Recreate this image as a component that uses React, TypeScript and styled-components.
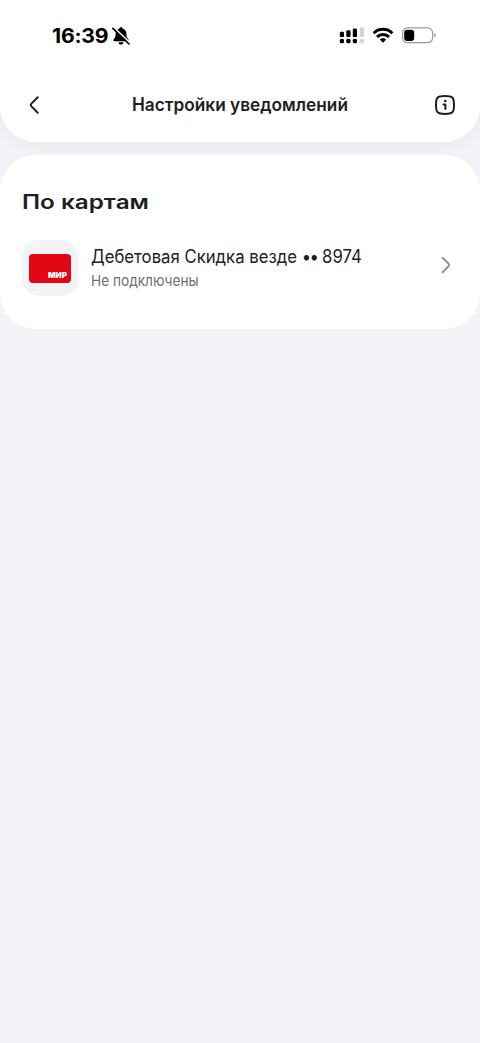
import React from "react";
import styled, { createGlobalStyle } from "styled-components";

const GlobalStyle = createGlobalStyle`
  *, *::before, *::after { box-sizing: border-box; }
  body {
    margin: 0;
    background: #f1f3f7;
    color: #1d2023;
    font-family: Inter, "Liberation Sans", sans-serif;
  }
`;

const Screen = styled.div`
  width: 100%;
  min-height: 1043px;
  display: flex;
  flex-direction: column;
  gap: 13px;
  background: #f1f3f7;
`;

const Header = styled.header`
  height: 142px;
  background: #fff;
  border-radius: 0 0 36px 36px;
  box-shadow: 0 4px 20px rgba(20, 25, 40, 0.04);
`;

const StatusBar = styled.div`
  display: flex;
  align-items: center;
  height: 71px;
  padding: 0 43px 0 52px;
`;

const Time = styled.span`
  width: 59px;
  font-size: 20px;
  font-weight: 700;
  line-height: 24px;
  letter-spacing: -0.2px;
  color: #000;
`;

const StatusIcons = styled.div`
  display: flex;
  align-items: center;
  gap: 8px;
  margin-left: auto;
`;

const Icon = styled.svg`
  display: block;
  flex: none;
`;

const NavBar = styled.div`
  display: flex;
  align-items: center;
  height: 67px;
  padding: 0 22px;
`;

const IconButton = styled.button`
  display: flex;
  padding: 0;
  border: 0;
  background: none;
  color: #1d2023;
`;

const FitText = styled.span<{ $scale: number }>`
  display: block;
  width: max-content;
  white-space: nowrap;
  transform: scaleX(${(p) => p.$scale});
  transform-origin: 0 50%;
`;

const Title = styled.h1`
  width: 216px;
  margin: 0 85px 0 86px;
  font-size: 18px;
  font-weight: 600;
  line-height: 24px;
`;

const Card = styled.section`
  display: flex;
  flex-direction: column;
  gap: 24px;
  height: 174px;
  padding: 33px 22px 0;
  background: #fff;
  border-radius: 36px;
  position: relative;
`;

const SectionTitle = styled.h2`
  margin: 0;
  font-size: 20px;
  font-weight: 600;
  line-height: 28px;
`;

const Row = styled.div`
  display: flex;
  align-items: center;
  height: 56px;
`;

const CardTile = styled.div`
  display: flex;
  align-items: center;
  justify-content: center;
  width: 56px;
  height: 56px;
  border-radius: 17px;
  background: #f2f3f7;
`;

const BankCard = styled.div`
  display: flex;
  align-items: flex-end;
  justify-content: flex-end;
  width: 42px;
  height: 29px;
  padding: 0 4px 4px 0;
  border-radius: 4px;
  background: #e30613;
  color: #fff;
`;

const Brand = styled.span`
  font-size: 8px;
  font-weight: 900;
  line-height: 8px;
`;

const RowText = styled.div`
  flex: 1;
  margin-left: 13px;
  padding-top: 2px;
`;

const RowTitle = styled.div`
  font-size: 18px;
  line-height: 24px;
`;

const Dots = styled.span`
  letter-spacing: -1.7px;
`;

const RowStatus = styled.div`
  font-size: 15px;
  line-height: 24px;
  color: #6b7073;
`;

const RowChevron = styled(Icon)`
  margin-bottom: 6px;
`;

const BellOff = () => (
  <Icon width="20" height="20" viewBox="0 0 20 20">
    <path d="M10 1.200c-1 0-1.700.6-1.900 1.500C5.700 3.500 4.600 5.400 4.600 8c0 3-.7 4-1.900 5.300-.8.9-.4 2 .8 2h13c1.200 0 1.600-1.100.8-2C16.100 12 15.400 11 15.400 8c0-2.600-1.100-4.500-3.500-5.300-.2-.9-.9-1.500-1.900-1.500zM7.500 16.200c.2 1.400 1.200 2.300 2.500 2.300s2.300-.9 2.500-2.300z" fill="#000" />
    <path d="M3 1.700 19.200 17" stroke="#fff" strokeWidth="1.700" />
    <path d="M1.800 2.300 18 18" stroke="#000" strokeWidth="1.700" strokeLinecap="round" />
  </Icon>
);

const signal = [
  { x: 0, top: 4.5 },
  { x: 6.5, top: 3 },
  { x: 13, top: 1.2 },
  { x: 20, top: 0 },
];

const Signal = () => (
  <Icon width="25" height="17" viewBox="0 0 25 17">
    {signal.map((bar, i) => (
      <g key={bar.x} fill={i === 3 ? "#d4d4d6" : "#000"}>
        <rect x={bar.x + 0.8} y={bar.top + 0.3} width="4.200" height={9.8 - bar.top} rx="1.200" />
        <rect x={bar.x + 0.8} y="11.800" width="4.200" height="4.500" rx="1.500" />
      </g>
    ))}
  </Icon>
);

const Wifi = () => (
  <Icon width="22" height="17" viewBox="0 0 22 17">
    <g fill="none" stroke="#000" strokeWidth="2.900">
      <path d="M1.600 6.200a13.300 13.300 0 0 1 18.800 0" />
      <path d="M5 9.900a8.600 8.600 0 0 1 12 0" />
    </g>
    <path d="m11 15.800-3.200-3.200a4.600 4.600 0 0 1 6.400 0z" fill="#000" />
  </Icon>
);

const Battery = () => (
  <Icon width="35" height="17" viewBox="0 0 35 17">
    <rect x="0.600" y="0.900" width="30" height="14.800" rx="4.800" fill="none" stroke="#9b9b9d" strokeWidth="1.200" />
    <rect x="2.200" y="2.700" width="10" height="11.200" rx="3" fill="#000" />
    <path d="M32.200 5.800c1.900.8 1.900 4.200 0 5z" fill="#9b9b9d" />
  </Icon>
);

export default function App() {
  return (
    <>
      <GlobalStyle />
      <Screen>
        <Header>
          <StatusBar>
            <Time><FitText $scale={1.06}>16:39</FitText></Time>
            <BellOff />
            <StatusIcons>
              <Signal />
              <Wifi />
              <Battery />
            </StatusIcons>
          </StatusBar>
          <NavBar>
            <IconButton aria-label="Назад">
              <Icon width="24" height="24" viewBox="0 0 24 24">
                <path d="m15.700 4.300-6.500 6.600a1.600 1.600 0 0 0 0 2.200l6.500 6.600" fill="none" stroke="currentColor" strokeWidth="2" strokeLinecap="round" />
              </Icon>
            </IconButton>
            <Title><FitText $scale={0.958}>Настройки уведомлений</FitText></Title>
            <IconButton aria-label="Информация">
              <Icon width="24" height="24" viewBox="0 0 24 24">
                <path d="M12 2.900c7.600 0 9 1.400 9 9s-1.400 9-9 9-9-1.400-9-9 1.400-9 9-9z" fill="none" stroke="currentColor" strokeWidth="2" />
                <circle cx="12.200" cy="8" r="1.300" fill="currentColor" />
                <path d="M10.500 11.500h1.900v4.500" fill="none" stroke="currentColor" strokeWidth="2" strokeLinecap="round" strokeLinejoin="round" />
              </Icon>
            </IconButton>
          </NavBar>
        </Header>
        <Card>
          <SectionTitle><FitText $scale={1.213}>По картам</FitText></SectionTitle>
          <Row>
            <CardTile>
              <BankCard><Brand>МИР</Brand></BankCard>
            </CardTile>
            <RowText>
              <RowTitle><FitText $scale={0.929}>Дебетовая Скидка везде <Dots>••</Dots> 8974</FitText></RowTitle>
              <RowStatus><FitText $scale={0.91}>Не подключены</FitText></RowStatus>
            </RowText>
            <RowChevron width="24" height="24" viewBox="0 0 24 24">
              <path d="m8.600 4.700 6.200 6.300a1.500 1.500 0 0 1 0 2l-6.200 6.300" fill="none" stroke="#8d969b" strokeWidth="2" strokeLinecap="round" />
            </RowChevron>
          </Row>
        </Card>
      </Screen>
    </>
  );
}
